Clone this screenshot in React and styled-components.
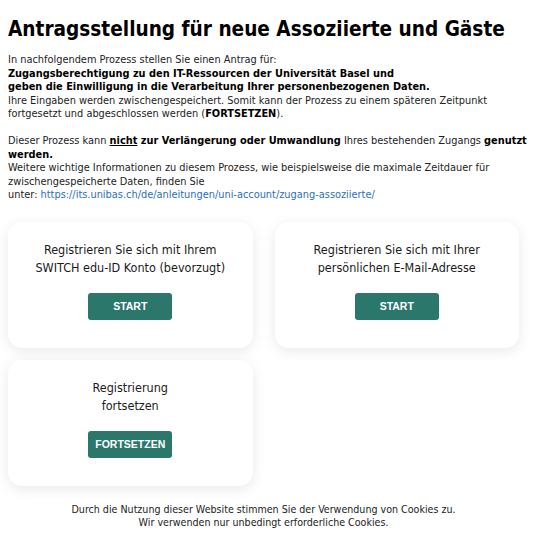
import React from 'react'
import styled, { createGlobalStyle } from 'styled-components'

const GlobalStyle = createGlobalStyle`
  body {
    margin: 0;
    background: #ffffff;
    color: #1a1a1a;
    font-family: "DejaVu Sans Condensed", "DejaVu Sans", sans-serif;
  }
`

const Page = styled.main`
  padding: 14px 8px 0 8px;
`

const Title = styled.h1`
  margin: 0 0 9px 0;
  font-size: 20.6px;
  line-height: 30px;
  font-weight: bold;
  color: #000;
`

const Intro = styled.div`
  width: 534px;
  font-size: 10.9px;
  line-height: 13.5px;
  color: #222;

  p {
    margin: 0 0 13.5px 0;
  }

  strong {
    color: #000;
  }

  a {
    color: #2a6fc0;
    text-decoration: none;
  }
`

const Grid = styled.section`
  width: 511px;
  display: grid;
  grid-template-columns: 1fr 1fr;
  gap: 12px 22px;
  margin-top: 20px;
`

const Card = styled.div`
  background: #fff;
  border-radius: 14px;
  box-shadow: 0 3px 14px rgba(0, 0, 0, 0.09);
  height: 126px;
  box-sizing: border-box;
  padding-top: 19px;
  display: flex;
  flex-direction: column;
  align-items: center;
`

const CardText = styled.div`
  font-size: 12.5px;
  line-height: 18px;
  text-align: center;
  color: #1a1a1a;
`

const Button = styled.button`
  margin-top: 16px;
  width: 84px;
  height: 27px;
  border: none;
  border-radius: 3px;
  background: #2b776c;
  color: #fff;
  font-family: "Liberation Sans", Arial, sans-serif;
  font-size: 10.5px;
  font-weight: bold;
  padding: 0;
  cursor: pointer;
`

const Footer = styled.footer`
  width: 511px;
  margin-top: 17px;
  text-align: center;
  font-size: 10.6px;
  line-height: 13.5px;
  color: #222;
`

export default function App() {
  return (
    <>
      <GlobalStyle />
      <Page>
        <Title>Antragsstellung für neue Assoziierte und Gäste</Title>
        <Intro>
          <p>
            In nachfolgendem Prozess stellen Sie einen Antrag für:<br />
            <strong>Zugangsberechtigung zu den IT-Ressourcen der Universität Basel und<br />
            geben die Einwilligung in die Verarbeitung Ihrer personenbezogenen Daten.</strong><br />
            Ihre Eingaben werden zwischengespeichert. Somit kann der Prozess zu einem späteren Zeitpunkt<br />
            fortgesetzt und abgeschlossen werden (<strong>FORTSETZEN</strong>).
          </p>
          <p>
            Dieser Prozess kann <strong><u>nicht</u> zur Verlängerung oder Umwandlung</strong> Ihres bestehenden Zugangs <strong>genutzt<br />werden.</strong><br />
            Weitere wichtige Informationen zu diesem Prozess, wie beispielsweise die maximale Zeitdauer für<br />
            zwischengespeicherte Daten, finden Sie<br />
            unter: <a href="#">https://its.unibas.ch/de/anleitungen/uni-account/zugang-assoziierte/</a>
          </p>
        </Intro>
        <Grid>
          <Card>
            <CardText>Registrieren Sie sich mit Ihrem<br />SWITCH edu-ID Konto (bevorzugt)</CardText>
            <Button>START</Button>
          </Card>
          <Card>
            <CardText>Registrieren Sie sich mit Ihrer<br />persönlichen E-Mail-Adresse</CardText>
            <Button>START</Button>
          </Card>
          <Card>
            <CardText>Registrierung<br />fortsetzen</CardText>
            <Button>FORTSETZEN</Button>
          </Card>
        </Grid>
        <Footer>
          Durch die Nutzung dieser Website stimmen Sie der Verwendung von Cookies zu.<br />
          Wir verwenden nur unbedingt erforderliche Cookies.
        </Footer>
      </Page>
    </>
  )
}
